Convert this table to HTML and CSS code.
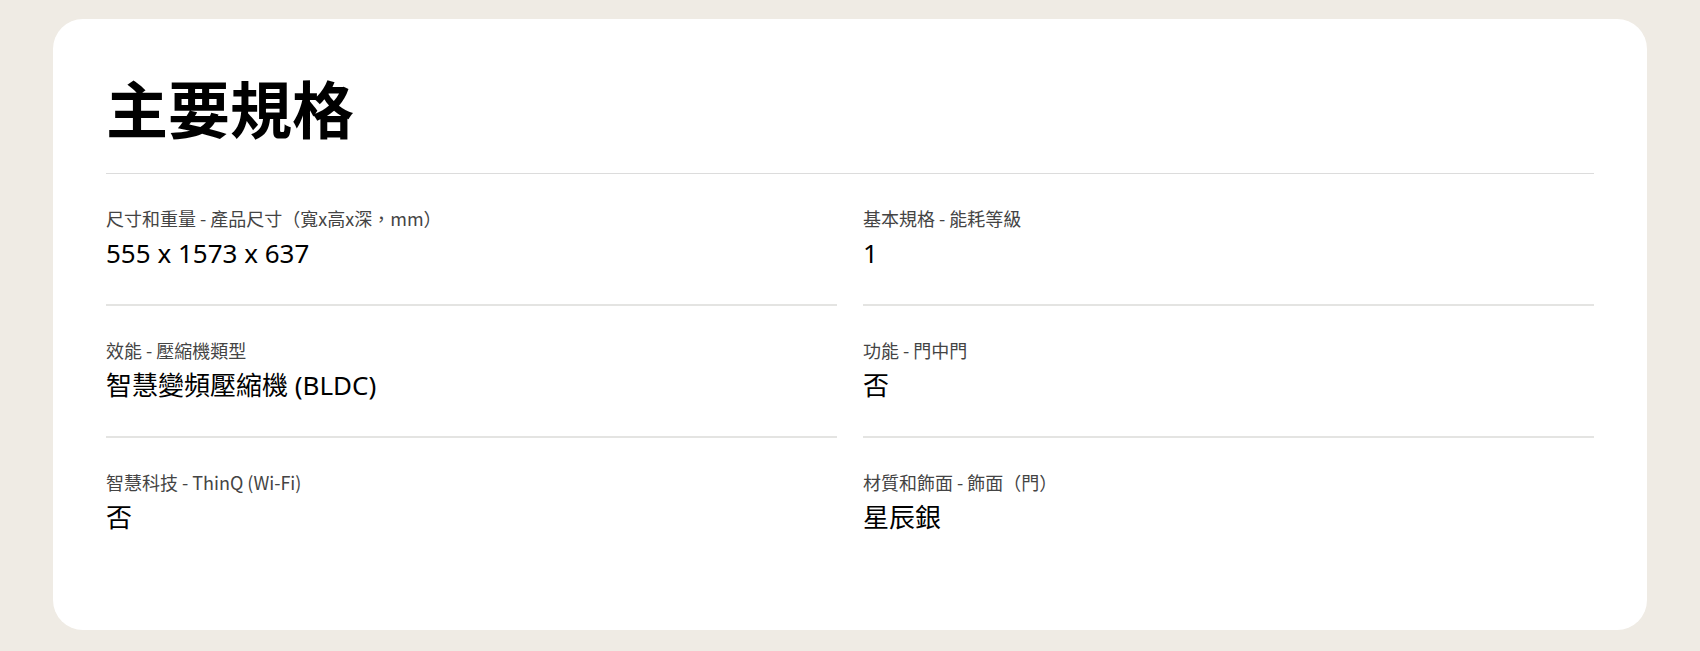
FILE: index.html
```html
<!DOCTYPE html>
<html lang="zh-Hant">
<head>
<meta charset="utf-8">
<title>主要規格</title>
<link rel="stylesheet" href="styles.css">
</head>
<body>
<section class="spec-card">
  <h1 class="spec-title">主要規格</h1>
  <dl class="spec-list">
    <div class="spec-item">
      <dt class="spec-label">尺寸和重量 - 產品尺寸（寬x高x深，mm）</dt>
      <dd class="spec-value">555 x 1573 x 637</dd>
    </div>
    <div class="spec-item">
      <dt class="spec-label">基本規格 - 能耗等級</dt>
      <dd class="spec-value">1</dd>
    </div>
    <div class="spec-item">
      <dt class="spec-label">效能 - 壓縮機類型</dt>
      <dd class="spec-value">智慧變頻壓縮機 (BLDC)</dd>
    </div>
    <div class="spec-item">
      <dt class="spec-label">功能 - 門中門</dt>
      <dd class="spec-value">否</dd>
    </div>
    <div class="spec-item spec-item--last">
      <dt class="spec-label">智慧科技 - ThinQ (Wi-Fi)</dt>
      <dd class="spec-value">否</dd>
    </div>
    <div class="spec-item spec-item--last">
      <dt class="spec-label">材質和飾面 - 飾面（門）</dt>
      <dd class="spec-value">星辰銀</dd>
    </div>
  </dl>
</section>
</body>
</html>
```

FILE: styles.css
```css
* {
  box-sizing: border-box;
}

html, body {
  margin: 0;
  background: #efebe4;
}

body {
  padding: 19px 53px 21px;
  font-family: "Noto Sans", "Noto Sans CJK TC", sans-serif;
  color: #000;
}

.spec-card {
  background: #ffffff;
  border-radius: 30px;
  padding: 51px 53px 0;
  height: 611px;
}

.spec-title {
  margin: 0;
  font-family: "Noto Sans CJK TC", sans-serif;
  font-size: 62px;
  line-height: 74px;
  font-weight: 700;
  padding-bottom: 29px;
  border-bottom: 1px solid #dcdcdc;
}

.spec-list {
  margin: 0;
  display: grid;
  grid-template-columns: 1fr 1fr;
  column-gap: 26px;
}

.spec-item {
  padding: 31px 0 33px;
  border-bottom: 2px solid #e4e4e2;
}

.spec-item--last {
  border-bottom: none;
}

.spec-label {
  font-family: "Noto Sans CJK TC", sans-serif;
  font-size: 18px;
  line-height: 26px;
  color: #444444;
}

.spec-value {
  margin: 4px 0 0;
  font-size: 26px;
  line-height: 36px;
  color: #000000;
}
```
